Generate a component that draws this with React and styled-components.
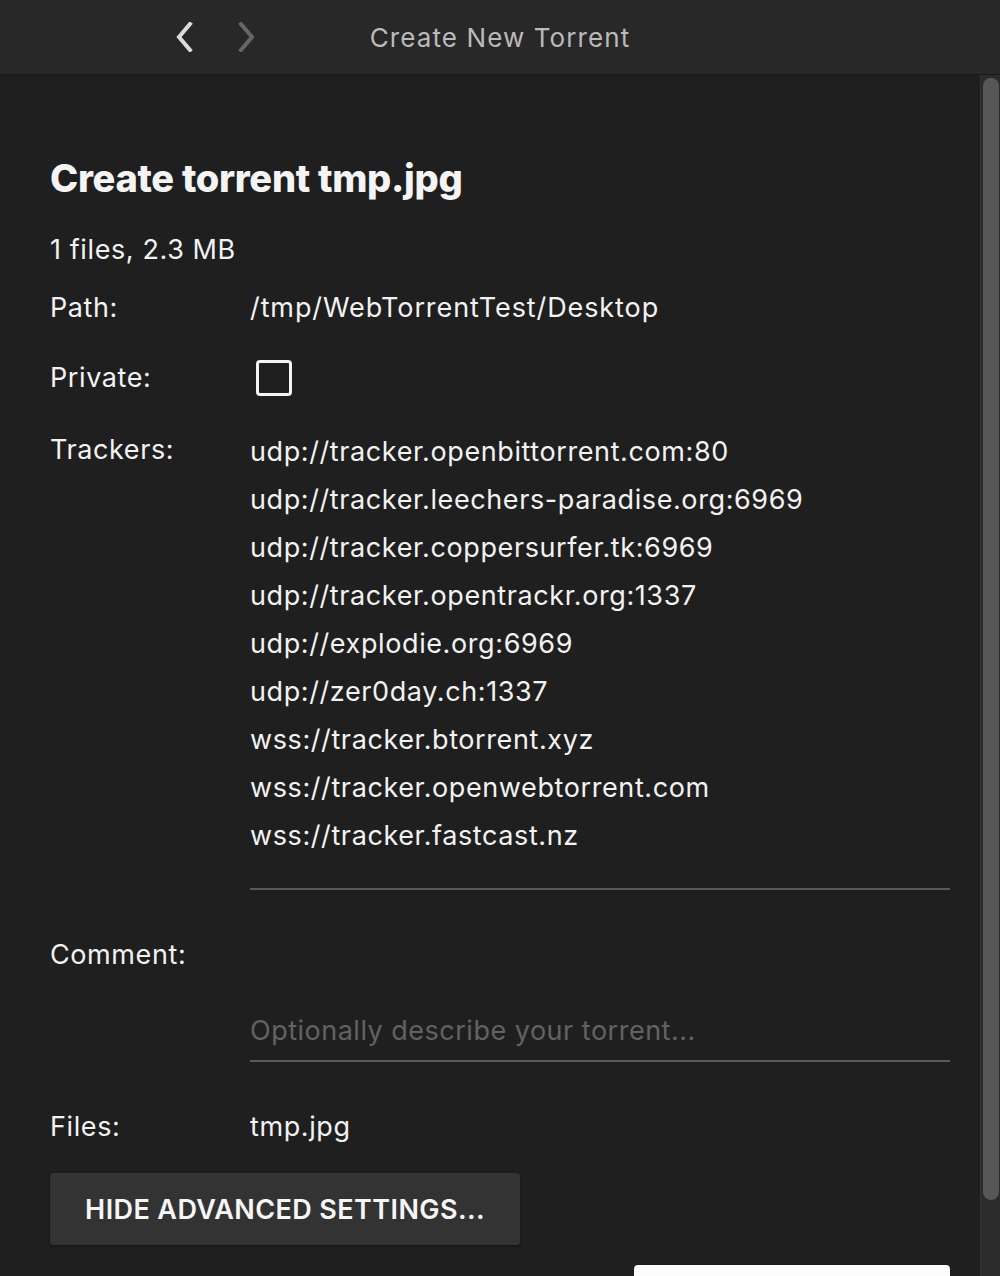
import React from "react";
import styled, { createGlobalStyle } from "styled-components";

const Global = createGlobalStyle`
  html, body { margin: 0; padding: 0; background: #1f1f1f; overflow: hidden; }
  body { font-family: Inter, "Noto Sans", "Liberation Sans", sans-serif; -webkit-font-smoothing: antialiased; }
`;

const Page = styled.div`
  width: 1000px;
  height: 1276px;
  display: flex;
  flex-direction: column;
  background: #1f1f1f;
  overflow: hidden;
`;

const Header = styled.header`
  height: 74px;
  flex: none;
  background: #282828;
  border-bottom: 1px solid #191919;
  display: flex;
  align-items: center;
  position: relative;
`;

const NavButtons = styled.div`
  display: flex;
  gap: 33px;
  margin-left: 171px;
  align-items: center;
`;

const NavBtn = styled.div`
  width: 28px;
  height: 32px;
  display: flex;
  align-items: center;
  justify-content: center;
  color: ${(p) => (p.$dim ? "#666" : "#dcdcdc")};
`;

const HeaderTitle = styled.div`
  position: absolute;
  left: 0;
  right: 0;
  text-align: center;
  font-size: 26px;
  color: #bababa;
  letter-spacing: 1.1px;
  pointer-events: none;
`;

const Body = styled.div`
  flex: 1;
  display: flex;
  min-height: 0;
`;

const Main = styled.main`
  flex: 1;
  padding: 80px 30px 0 50px;
  color: #f2f2f2;
  font-size: 27px;
  letter-spacing: 0.6px;
`;

const Track = styled.div`
  width: 20px;
  flex: none;
  background: #2b2b2b;
  border-left: 1px solid #333;
  box-sizing: border-box;
  padding: 3px 1px 0 2px;
`;

const Thumb = styled.div`
  height: 1122px;
  background: #575757;
  border-radius: 8px;
`;

const Title = styled.h1`
  margin: 0;
  font-size: 38px;
  line-height: 46px;
  font-weight: 800;
  letter-spacing: -0.3px;
  color: #f4f4f4;
`;

const Summary = styled.div`
  margin-top: 31px;
  line-height: 36px;
`;

const Row = styled.div`
  display: flex;
  align-items: ${(p) => p.$align || "center"};
  margin-top: ${(p) => p.$mt}px;
  min-height: 36px;
`;

const Label = styled.div`
  width: 200px;
  flex: none;
  line-height: 36px;
  margin-top: ${(p) => p.$mt || 0}px;
`;

const Value = styled.div`
  flex: 1;
  line-height: 36px;
  letter-spacing: ${(p) => p.$ls || "inherit"};
`;

const Checkbox = styled.div`
  width: 36px;
  height: 36px;
  box-sizing: border-box;
  border: 3px solid #f4f4f4;
  border-radius: 4px;
  margin-left: 6px;
`;

const TrackerList = styled.div`
  flex: 1;
  display: flex;
  flex-direction: column;
`;

const Trackers = styled.div`
  line-height: 48px;
  white-space: pre;
  padding-bottom: 28px;
  border-bottom: 2px solid #5a5a5a;
`;

const CommentField = styled.div`
  flex: 1;
  line-height: 36px;
  color: #626262;
  letter-spacing: 0.5px;
  padding: 123px 0 11px;
  border-bottom: 2px solid #5a5a5a;
`;

const AdvancedButton = styled.button`
  margin-top: 28px;
  width: 470px;
  height: 72px;
  background: #333333;
  border: none;
  border-radius: 3px;
  box-shadow: 0 1px 3px rgba(0, 0, 0, 0.4);
  color: #f6f6f6;
  font-family: inherit;
  font-size: 27px;
  font-weight: 600;
  letter-spacing: 0.4px;
  text-transform: uppercase;
  display: flex;
  align-items: center;
  justify-content: center;
  cursor: pointer;
`;

const Footer = styled.div`
  display: flex;
  justify-content: flex-end;
  margin-top: 20px;
`;

const PrimaryButton = styled.button`
  width: 316px;
  height: 72px;
  background: #fcfcfc;
  border: none;
  border-radius: 4px;
`;

const trackers = [
  "udp://tracker.openbittorrent.com:80",
  "udp://tracker.leechers-paradise.org:6969",
  "udp://tracker.coppersurfer.tk:6969",
  "udp://tracker.opentrackr.org:1337",
  "udp://explodie.org:6969",
  "udp://zer0day.ch:1337",
  "wss://tracker.btorrent.xyz",
  "wss://tracker.openwebtorrent.com",
  "wss://tracker.fastcast.nz",
];

const Chevron = ({ dir }) => (
  <svg width="20" height="30" viewBox="0 0 20 30" fill="none">
    <path
      d={dir === "left" ? "M15 2 L4 15 L15 28" : "M5 2 L16 15 L5 28"}
      stroke="currentColor"
      strokeWidth="4"
      strokeLinecap="square"
      strokeLinejoin="miter"
    />
  </svg>
);

export default function App() {
  return (
    <Page>
      <Global />
      <Header>
        <NavButtons>
          <NavBtn><Chevron dir="left" /></NavBtn>
          <NavBtn $dim><Chevron dir="right" /></NavBtn>
        </NavButtons>
        <HeaderTitle>Create New Torrent</HeaderTitle>
      </Header>
      <Body>
        <Main>
          <Title>Create torrent tmp.jpg</Title>
          <Summary>1 files, 2.3 MB</Summary>
          <Row $mt={22}>
            <Label>Path:</Label>
            <Value $ls="0.9px">/tmp/WebTorrentTest/Desktop</Value>
          </Row>
          <Row $mt={34}>
            <Label>Private:</Label>
            <Checkbox />
          </Row>
          <Row $mt={32} $align="flex-start">
            <Label $mt={4}>Trackers:</Label>
            <TrackerList>
              <Trackers>{trackers.join("\n")}</Trackers>
            </TrackerList>
          </Row>
          <Row $mt={0} $align="flex-start">
            <Label $mt={47}>Comment:</Label>
            <CommentField>Optionally describe your torrent...</CommentField>
          </Row>
          <Row $mt={47}>
            <Label>Files:</Label>
            <Value>tmp.jpg</Value>
          </Row>
          <AdvancedButton>Hide advanced settings...</AdvancedButton>
          <Footer>
            <PrimaryButton />
          </Footer>
        </Main>
        <Track>
          <Thumb />
        </Track>
      </Body>
    </Page>
  );
}
